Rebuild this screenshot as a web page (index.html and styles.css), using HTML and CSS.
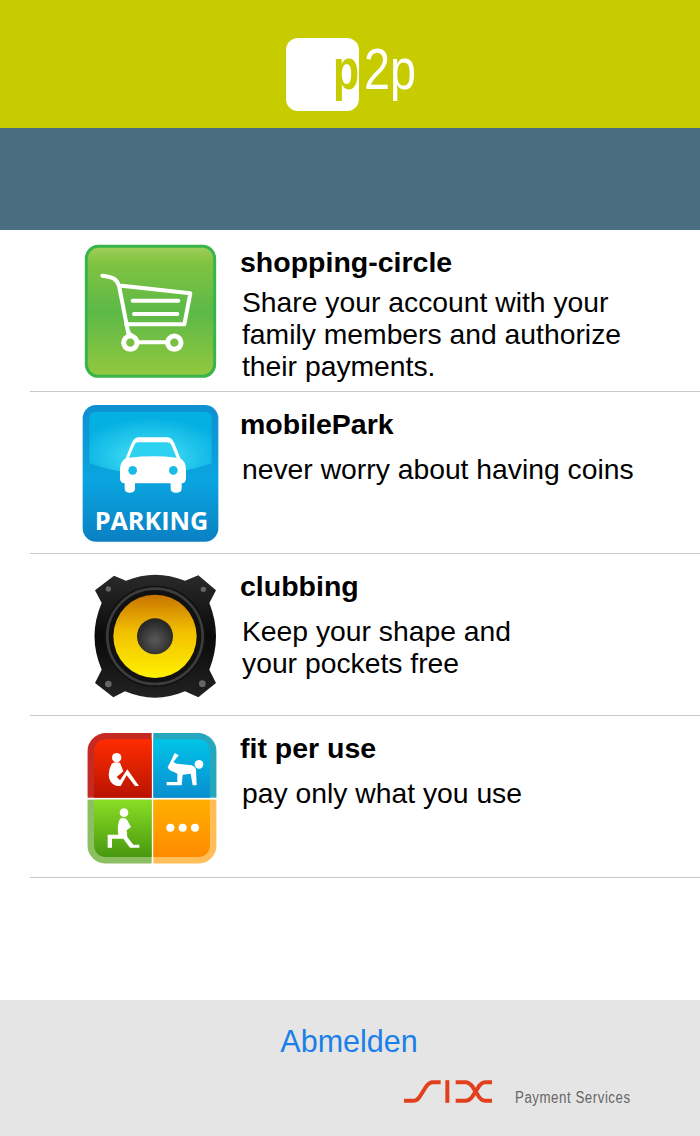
FILE: index.html
```html
<!DOCTYPE html>
<html lang="en">
<head>
  <meta charset="UTF-8"/>
  <meta name="viewport" content="width=device-width, initial-scale=1.0"/>
  <title>p2p</title>
  <link rel="stylesheet" href="styles.css">
</head>
<body>

  <header class="top-bar">
    <div class="logo">
      <div class="logo-box"><span class="logo-p">p</span></div>
      <span class="logo-rest">2p</span>
    </div>
  </header>

  <div class="sub-bar"></div>

  <ul class="app-list">
    <li class="app-row">
      <svg class="app-icon" viewBox="30 15 420 420">
        <defs>
          <linearGradient id="cartBg" x1="0" y1="0" x2="0" y2="1">
            <stop offset="0" stop-color="#a3cf5c"/>
            <stop offset="0.12" stop-color="#82c341"/>
            <stop offset="0.5" stop-color="#5cb947"/>
            <stop offset="0.88" stop-color="#86c440"/>
            <stop offset="1" stop-color="#93c93f"/>
          </linearGradient>
        </defs>
        <rect x="49" y="34" width="385" height="390" rx="36" fill="url(#cartBg)" stroke="#38b54a" stroke-width="9"/>
        <g fill="none" stroke="#fff" stroke-width="12" stroke-linecap="round" stroke-linejoin="round">
          <path d="M97 122C125 125 140 130 147 152L175 295"/>
          <path d="M155 152L361 175L343 268H168"/>
          <path d="M188 197H325M192 237H322"/>
          <path d="M175 290Q178 298 184 300M200 322H292"/>
          <circle cx="181" cy="323" r="20" stroke-width="15"/>
          <circle cx="313" cy="323" r="20" stroke-width="15"/>
        </g>
      </svg>
      <div class="app-text">
        <h2 class="app-name">shopping-circle</h2>
        <p class="app-desc app-desc-long">Share your account with your<br>family members and authorize<br>their payments.</p>
      </div>
    </li>

    <li class="app-row">
      <svg class="app-icon" viewBox="30 21 420 420">
        <defs>
          <linearGradient id="parkBg" x1="0" y1="0" x2="0" y2="1">
            <stop offset="0" stop-color="#0f8fd2"/>
            <stop offset="0.55" stop-color="#0aa5df"/>
            <stop offset="1" stop-color="#0a80c4"/>
          </linearGradient>
          <radialGradient id="parkTop" cx="0.5" cy="0.72" r="0.62">
            <stop offset="0" stop-color="#4ce4f8"/>
            <stop offset="1" stop-color="#04b0e2"/>
          </radialGradient>
        </defs>
        <rect x="38" y="30" width="407" height="410" rx="40" fill="url(#parkBg)"/>
        <path d="M58 72Q58 50 80 50H403Q425 50 425 72V205Q240 270 58 205Z" fill="url(#parkTop)"/>
        <path d="M205 127H293Q305 127 313 145L331 190Q348 200 348 225V250Q348 265 335 265V280Q335 293 321 293H315Q302 293 302 280V265H195V280Q195 293 181 293H177Q164 293 164 280V265Q150 265 150 250V225Q150 200 167 190L185 145Q193 127 205 127Z" fill="#fff"/>
        <path d="M203 142H294Q301 142 304 150L320 188Q250 180 177 188L193 150Q196 142 203 142Z" fill="#2cd2f0"/>
        <circle cx="188" cy="226" r="13" fill="#18bce6"/>
        <circle cx="310" cy="226" r="13" fill="#18bce6"/>
        <text class="park-label" x="74" y="404" textLength="341" lengthAdjust="spacingAndGlyphs">PARKING</text>
      </svg>
      <div class="app-text">
        <h2 class="app-name">mobilePark</h2>
        <p class="app-desc">never worry about having coins</p>
      </div>
    </li>

    <li class="app-row">
      <svg class="app-icon" viewBox="30 18 420 420">
        <defs>
          <linearGradient id="coneBg" x1="0" y1="0" x2="0" y2="1">
            <stop offset="0" stop-color="#c87400"/>
            <stop offset="0.45" stop-color="#f2c000"/>
            <stop offset="1" stop-color="#fff200"/>
          </linearGradient>
          <radialGradient id="capBg" cx="0.5" cy="0.6" r="0.55">
            <stop offset="0" stop-color="#5a5a5a"/>
            <stop offset="1" stop-color="#262626"/>
          </radialGradient>
          <linearGradient id="bodyBg" x1="0" y1="0" x2="0" y2="1">
            <stop offset="0" stop-color="#2a2a2a"/>
            <stop offset="0.5" stop-color="#0a0a0a"/>
            <stop offset="1" stop-color="#222"/>
          </linearGradient>
        </defs>
        <path d="M75 97L132 53L168 68Q255 32 345 68L385 52L438 97L418 135Q458 235 418 335L438 375L385 418L345 400Q255 438 165 400L130 418L75 375L95 335Q52 235 95 135Z" fill="url(#bodyBg)"/>
        <circle cx="255" cy="235" r="152" fill="#111"/>
        <circle cx="255" cy="235" r="143" fill="none" stroke="#3c3c3c" stroke-width="8"/>
        <circle cx="255" cy="235" r="125" fill="url(#coneBg)"/>
        <circle cx="255" cy="235" r="54" fill="url(#capBg)"/>
        <g fill="#666">
          <circle cx="115" cy="93" r="8"/>
          <circle cx="400" cy="94" r="8"/>
          <circle cx="115" cy="378" r="10"/>
          <circle cx="397" cy="377" r="10"/>
        </g>
      </svg>
      <div class="app-text">
        <h2 class="app-name">clubbing</h2>
        <p class="app-desc">Keep your shape and<br>your pockets free</p>
      </div>
    </li>

    <li class="app-row">
      <svg class="app-icon" viewBox="30 12 420 420">
        <defs>
          <clipPath id="fitClip"><rect x="52" y="33" width="388" height="392" rx="56"/></clipPath>
          <linearGradient id="fitRed" x1="0" y1="0" x2="0" y2="1"><stop offset="0" stop-color="#ff2c00"/><stop offset="1" stop-color="#b81400"/></linearGradient>
          <linearGradient id="fitBlue" x1="0" y1="0" x2="0" y2="1"><stop offset="0" stop-color="#00c4e8"/><stop offset="1" stop-color="#0a8ed0"/></linearGradient>
          <linearGradient id="fitGreen" x1="0" y1="0" x2="0" y2="1"><stop offset="0" stop-color="#8ade24"/><stop offset="1" stop-color="#489810"/></linearGradient>
          <linearGradient id="fitOrange" x1="0" y1="0" x2="0" y2="1"><stop offset="0" stop-color="#ffb000"/><stop offset="1" stop-color="#ff8a00"/></linearGradient>
        </defs>
        <g clip-path="url(#fitClip)">
          <rect x="52" y="33" width="193" height="194" fill="#c52a22"/>
          <rect x="250" y="33" width="190" height="194" fill="#25a7bd"/>
          <rect x="52" y="233" width="193" height="192" fill="#8cbf62"/>
          <rect x="250" y="233" width="190" height="192" fill="#ffbe58"/>
          <path d="M72 92Q72 52 112 52H245V227H72Z" fill="url(#fitRed)"/>
          <path d="M250 52H380Q420 52 420 92V227H250Z" fill="url(#fitBlue)"/>
          <path d="M72 233H245V405H112Q72 405 72 365Z" fill="url(#fitGreen)"/>
          <path d="M250 233H420V365Q420 405 380 405H250Z" fill="url(#fitOrange)"/>
        </g>
        <g fill="#fff">
          <circle cx="140" cy="107" r="14"/>
          <path d="M125 125Q112 150 118 170Q125 190 145 192H152L170 160L195 192H207L172 142L150 175L140 165L160 148L150 122Q135 118 125 125Z"/>
          <circle cx="387" cy="127" r="13"/>
          <path d="M300 122L293 135Q295 145 312 150L322 155V180H290V190H335L338 158L362 155L368 190H380L378 145Q378 135 365 130L320 125L310 120L326 100L314 93Z"/>
          <circle cx="162" cy="272" r="13"/>
          <path d="M150 290Q140 310 145 338H113V377H126V350H160L180 377H208V368H190L172 345L170 325L183 315L172 295Q165 285 150 290Z"/>
          <circle cx="301" cy="317" r="12"/>
          <circle cx="338" cy="317" r="12"/>
          <circle cx="375" cy="317" r="12"/>
        </g>
      </svg>
      <div class="app-text">
        <h2 class="app-name">fit per use</h2>
        <p class="app-desc">pay only what you use</p>
      </div>
    </li>
  </ul>

  <footer class="bottom-bar">
    <a class="logout-link" href="#">Abmelden</a>
    <div class="six-brand">
      <svg class="six-logo" viewBox="42 60 264 68">
        <g fill="none" stroke="#e2401c" stroke-width="12">
          <path d="M42 122H68Q82 122 90 108L108 80Q116 66 130 66H152"/>
          <path d="M172 60V128"/>
          <path d="M197 66H226Q238 66 248 80L262 102Q272 122 286 122H306"/>
          <path d="M197 122H226Q238 122 248 108L262 86Q272 66 286 66H306"/>
        </g>
      </svg>
      <span class="six-text">Payment Services</span>
    </div>
  </footer>

</body>
</html>
```

FILE: styles.css
```css
* {
  box-sizing: border-box;
}

body {
  margin: 0;
  width: 700px;
  height: 1136px;
  display: flex;
  flex-direction: column;
  font-family: "Liberation Sans", Arial, sans-serif;
  background: #fff;
  color: #000;
}

.top-bar {
  height: 128px;
  background: #c6cc00;
  padding-top: 38px;
  display: flex;
  justify-content: center;
}

.logo {
  display: flex;
  width: 130px;
  margin-left: 2px;
  font-size: 57px;
  line-height: 63px;
}

.logo-box {
  width: 73px;
  height: 73px;
  flex-shrink: 0;
  background: #fff;
  border-radius: 12px;
  display: flex;
  justify-content: flex-end;
}

.logo-p {
  width: 26px;
  color: #c6cc00;
  font-weight: 700;
  transform: scaleX(0.75);
  transform-origin: left;
}

.logo-rest {
  width: 52px;
  flex-shrink: 0;
  color: #fff;
  margin-left: 5px;
  white-space: nowrap;
  transform: scaleX(0.82);
  transform-origin: left;
}

.sub-bar {
  height: 102px;
  background: #4a6e80;
}

.app-list {
  list-style: none;
  margin: 0 0 0 30px;
  padding: 0;
  flex: 1;
}

.app-row {
  height: 162px;
  padding: 10px 0 0 50px;
  border-bottom: 1px solid #c8c8c8;
  display: flex;
  gap: 20px;
}

.app-icon {
  width: 140px;
  height: 140px;
  flex-shrink: 0;
}

.park-label {
  font-family: "Open Sans", sans-serif;
  font-weight: 700;
  font-size: 76px;
  fill: #fff;
}

.app-text {
  padding-top: 6px;
}

.app-name {
  margin: 0;
  font-size: 28.5px;
  line-height: 32px;
  font-weight: 700;
}

.app-desc {
  margin: 13px 0 0 2px;
  font-size: 28.3px;
  line-height: 32px;
}

.app-desc-long {
  margin-top: 8px;
}

.bottom-bar {
  height: 136px;
  background: #e5e5e5;
  display: flex;
  flex-direction: column;
  align-items: center;
  padding-top: 22px;
}

.logout-link {
  font-size: 30.5px;
  line-height: 38px;
  color: #1a7fe8;
  text-decoration: none;
  margin-left: -2px;
}

.six-brand {
  align-self: flex-end;
  display: flex;
  align-items: flex-end;
  gap: 23px;
  margin: 20px 69px 0 0;
}

.six-logo {
  width: 88px;
  height: 23px;
}

.six-text {
  width: 116px;
  margin-bottom: -4px;
  font-size: 16px;
  line-height: 18px;
  letter-spacing: 0.65px;
  color: #666;
  white-space: nowrap;
  transform: scaleX(0.83);
  transform-origin: left;
}
```
